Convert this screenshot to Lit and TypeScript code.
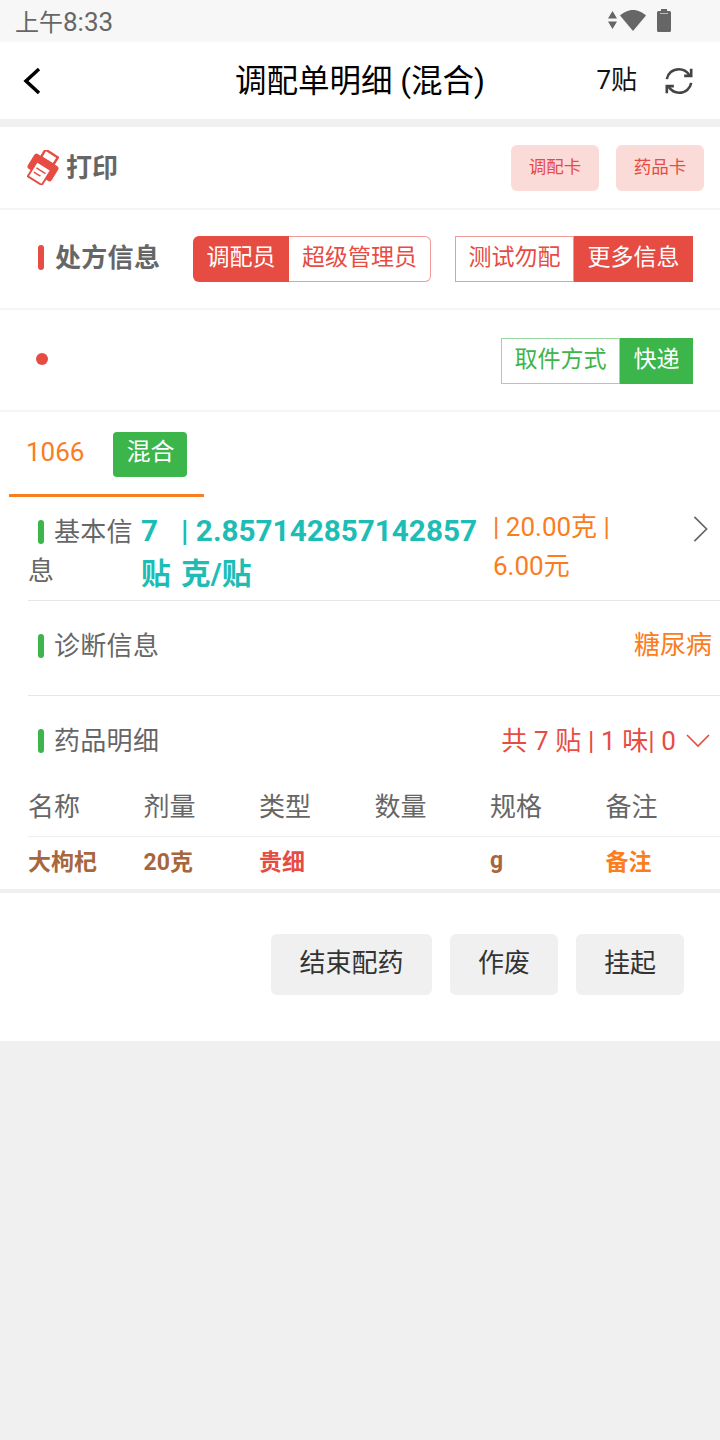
import { LitElement, html, css } from 'lit';
import { customElement } from 'lit/decorators.js';

const COLUMNS = ['名称', '剂量', '类型', '数量', '规格', '备注'];

@customElement('app-root')
export class AppRoot extends LitElement {
  static styles = css`
    :host {
      display: block;
      min-height: 1440px;
      background: #f0f0f0;
      font-family: Roboto, 'Noto Sans CJK SC', sans-serif;
      color: #666;
    }

    .status {
      height: 42px;
      background: #f7f7f7;
      display: flex;
      align-items: center;
      justify-content: space-between;
      padding: 0 49px 0 15px;
      box-sizing: border-box;
      font-size: 24px;
      color: #666;
    }

    .clock {
      padding-bottom: 2px;
    }

    .clock b {
      font-size: 26px;
      font-weight: 400;
    }

    .status-icons {
      display: flex;
      align-items: center;
      gap: 3px;
      padding-bottom: 2px;
    }

    .nav {
      height: 77px;
      background: #fff;
      display: grid;
      grid-template-columns: 1fr auto 1fr;
      align-items: center;
      padding: 0 24px;
      margin-bottom: 8px;
      color: #000;
    }

    .nav-back {
      margin-left: -2px;
    }

    .nav-title {
      font-size: 31.500px;
      padding-bottom: 5px;
    }

    .nav-right {
      display: flex;
      justify-content: flex-end;
      align-items: center;
      gap: 27px;
      margin-right: 2px;
      font-size: 26px;
      color: #111;
    }

    .nav-right span {
      padding-bottom: 6px;
    }

    .section {
      background: #fff;
    }

    .print-row {
      height: 81px;
      display: flex;
      align-items: center;
      padding: 0 16px 0 27px;
      border-bottom: 2px solid #f5f5f5;
    }

    .print-label {
      font-size: 26px;
      font-weight: 700;
      margin-left: 7px;
      flex: 1;
      padding-bottom: 4px;
    }

    .card-btn {
      width: 88px;
      height: 46px;
      margin-left: 17px;
      padding-bottom: 4px;
      box-sizing: border-box;
      display: flex;
      align-items: center;
      justify-content: center;
      border-radius: 6px;
      background: #fadbd8;
      color: #e74c43;
      font-size: 17.500px;
    }

    .info-row {
      height: 98px;
      display: flex;
      align-items: center;
      padding: 0 27px 0 38px;
      border-bottom: 2px solid #f5f5f5;
    }

    .bar {
      display: inline-block;
      width: 6px;
      height: 24px;
      border-radius: 3px;
      background: #3cb54a;
      vertical-align: -3px;
      margin-right: 10px;
    }

    .bar.red {
      height: 25px;
      margin-right: 11px;
      background: #e74c43;
    }

    .info-title {
      font-size: 26px;
      font-weight: 700;
      letter-spacing: 0.300px;
      white-space: nowrap;
      width: 155px;
      padding-bottom: 7px;
    }

    .seg {
      display: flex;
      height: 46px;
      font-size: 23px;
    }

    .seg span {
      display: flex;
      align-items: center;
      justify-content: center;
      box-sizing: border-box;
      height: 46px;
      padding-bottom: 8px;
    }

    .seg .solid {
      background: #e74c43;
      color: #fff;
    }

    .seg .line {
      border: 1px solid #f19b96;
      color: #e74c43;
      background: #fff;
    }

    .seg.round .solid {
      border-radius: 6px 0 0 6px;
    }

    .seg.round .line {
      border-left: 0;
      border-radius: 0 6px 6px 0;
    }

    .seg.second {
      margin-left: 24px;
    }

    .seg.green .line {
      border-color: #9ad8a2;
      color: #3cb54a;
    }

    .seg.green .solid {
      background: #3cb54a;
    }

    .pickup-row {
      height: 98px;
      padding: 2px 27px 0 36px;
      display: flex;
      align-items: center;
      justify-content: space-between;
      border-bottom: 2px solid #f5f5f5;
    }

    .dot {
      width: 12px;
      height: 12px;
      margin-top: -4px;
      border-radius: 50%;
      background: #e74c43;
    }

    .tab {
      width: 195px;
      height: 85px;
      margin-left: 9px;
      display: flex;
      align-items: flex-start;
      padding: 20px 0 0 17px;
      box-sizing: border-box;
      border-bottom: 3px solid #fa7d1e;
      color: #fa7d1e;
      font-size: 26px;
    }

    .tab-no {
      line-height: 40px;
    }

    .tab-badge {
      width: 74px;
      height: 45px;
      margin-left: 29px;
      padding-bottom: 10px;
      box-sizing: border-box;
      display: flex;
      align-items: center;
      justify-content: center;
      border-radius: 4px;
      background: #3cb54a;
      color: #fff;
      font-size: 24px;
    }

    .detail {
      margin-left: 28px;
      display: flex;
      font-size: 26px;
      border-bottom: 1px solid #e6e6e6;
      box-sizing: border-box;
    }

    .detail.basic {
      height: 104px;
      padding-top: 12px;
    }

    .detail.diag {
      height: 95px;
      padding-top: 25px;
      justify-content: space-between;
    }

    .detail.drugs {
      height: 74px;
      padding-top: 25px;
      border-bottom: 0;
      justify-content: space-between;
    }

    .label {
      line-height: 40px;
      letter-spacing: 0.300px;
    }

    .basic .label {
      width: 113px;
      flex: none;
      line-height: 39px;
      margin-top: 4px;
    }

    .bar.first {
      margin-left: 10px;
    }

    .teal {
      color: #1dbdb5;
      font-size: 29.700px;
      font-weight: 700;
      line-height: 43px;
      flex: none;
    }

    .teal.count {
      width: 40px;
    }

    .teal.dose {
      width: 312px;
    }

    .orange {
      color: #fa7d1e;
    }

    .basic .orange,
    .diag .orange {
      line-height: 39px;
    }

    .basic .orange {
      width: 130px;
      flex: none;
      margin-top: -1px;
    }

    .chevron {
      margin-left: auto;
      margin-right: 11px;
      margin-top: 6px;
    }

    .diag .orange {
      margin-right: 8px;
    }

    .drug-total {
      display: flex;
      align-items: flex-start;
      color: #e74c43;
      line-height: 40px;
      margin-right: 10px;
      gap: 10px;
      letter-spacing: 0.100px;
    }

    .table {
      margin-left: 28px;
    }

    .table-row {
      display: grid;
      grid-template-columns: repeat(6, 115.500px);
    }

    .table-head {
      height: 67px;
      padding-top: 2px;
      align-items: center;
      font-size: 26px;
      border-bottom: 1px solid #eee;
      box-sizing: border-box;
    }

    .table-body {
      height: 52px;
      padding-bottom: 6px;
      box-sizing: border-box;
      align-items: center;
      font-size: 23px;
      font-weight: 700;
      color: #a8663c;
    }

    .table-body .red {
      color: #e74c43;
    }

    .actions {
      height: 152px;
      border-top: 4px solid #f0f0f0;
      display: flex;
      justify-content: flex-end;
      align-items: flex-start;
      gap: 18px;
      padding: 41px 36px 0 0;
      box-sizing: border-box;
      background: #fff;
    }

    .action {
      height: 61px;
      padding: 0 28px 8px;
      box-sizing: border-box;
      display: flex;
      align-items: center;
      border-radius: 6px;
      background: #f0f0f0;
      color: #333;
      font-size: 26px;
    }

    .action.wide {
      padding: 0 28.500px 8px;
    }
  `;

  render() {
    return html`
      <div class="status">
        <span class="clock">上午<b>8:33</b></span>
        <span class="status-icons">
          <svg width="9" height="18" viewBox="0 0 9 18" fill="#666"><path d="M4.500 0L9 7.500H0zM4.500 18L0 10.500h9z" /></svg>
          <svg width="26" height="21" viewBox="0 0 26 21" fill="#666"><path d="M13 21L0 5.500C3 2.500 8 0 13 0s10 2.500 13 5.500z" /></svg>
          <svg width="14" height="23" viewBox="0 0 14 23" style="margin-left:8px"><path fill="#666" d="M4 0h6v2h2.500A1.500 1.500 0 0 1 14 3.500v18a1.500 1.500 0 0 1-1.500 1.500h-11A1.500 1.500 0 0 1 0 21.500v-18A1.500 1.500 0 0 1 1.500 2H4z" /><path d="M3 4.500h8" stroke="#bbb" stroke-width="1" /></svg>
        </span>
      </div>

      <div class="nav">
        <svg class="nav-back" width="20" height="30" viewBox="0 0 20 30" fill="none" stroke="#000" stroke-width="3.500"><path d="M17 3L4 15l13 12" /></svg>
        <span class="nav-title">调配单明细 (混合)</span>
        <span class="nav-right">
          <span>7贴</span>
          <svg width="30" height="30" viewBox="0 0 32 32" fill="none" stroke="#444" stroke-width="2.800">
            <path d="M3 14C4 8 9 3.500 16 3.500c5 0 8.500 2.500 11 6" />
            <path d="M29 18c-1 6-6 10.500-13 10.500-5 0-8.500-2.500-11-6" />
            <path d="M29 3v7.500h-7.500M3 29v-7.500h7.500" />
          </svg>
        </span>
      </div>

      <div class="section">
        <div class="print-row">
          <svg width="32" height="35" viewBox="0 0 33 36">
            <g transform="rotate(32 16.500 18)">
              <rect x="9" y="1" width="15" height="9" fill="none" stroke="#e74c43" stroke-width="2.500" />
              <rect x="2" y="9" width="29" height="18" rx="3" fill="#e74c43" />
              <rect x="8" y="16" width="17" height="18" fill="#fff" stroke="#e74c43" stroke-width="2" />
              <path d="M11 22h11M11 27h8" stroke="#e74c43" stroke-width="1.500" />
            </g>
          </svg>
          <span class="print-label">打印</span>
          <span class="card-btn">调配卡</span>
          <span class="card-btn">药品卡</span>
        </div>

        <div class="info-row">
          <span class="info-title"><i class="bar red"></i>处方信息</span>
          <div class="seg round">
            <span class="solid" style="width:96px">调配员</span>
            <span class="line" style="width:142px">超级管理员</span>
          </div>
          <div class="seg second">
            <span class="line" style="width:119px">测试勿配</span>
            <span class="solid" style="width:119px">更多信息</span>
          </div>
        </div>

        <div class="pickup-row">
          <span class="dot"></span>
          <div class="seg green">
            <span class="line" style="width:119px">取件方式</span>
            <span class="solid" style="width:73px">快递</span>
          </div>
        </div>

        <div class="tab">
          <span class="tab-no">1066</span>
          <span class="tab-badge">混合</span>
        </div>

        <div class="detail basic">
          <div class="label"><i class="bar first"></i>基本信息</div>
          <div class="teal count">7 贴</div>
          <div class="teal dose">| 2.857142857142857 克/贴</div>
          <div class="orange">| 20.00克 | 6.00元</div>
          <svg class="chevron" width="17" height="28" viewBox="0 0 17 30" fill="none" stroke="#666" stroke-width="1.800"><path d="M2 2l13 13L2 28" /></svg>
        </div>

        <div class="detail diag">
          <div class="label"><i class="bar first"></i>诊断信息</div>
          <div class="orange">糖尿病</div>
        </div>

        <div class="detail drugs">
          <div class="label"><i class="bar first"></i>药品明细</div>
          <div class="drug-total">
            <span>共 7 贴 | 1 味| 0</span>
            <svg width="24" height="40" viewBox="0 0 24 40" fill="none" stroke="#e74c43" stroke-width="1.600"><path d="M1 14l11 11 11-11" /></svg>
          </div>
        </div>

        <div class="table">
          <div class="table-row table-head">
            ${COLUMNS.map((c) => html`<span>${c}</span>`)}
          </div>
          <div class="table-row table-body">
            <span>大枸杞</span>
            <span>20克</span>
            <span class="red">贵细</span>
            <span></span>
            <span>g</span>
            <span class="orange">备注</span>
          </div>
        </div>

        <div class="actions">
          <span class="action wide">结束配药</span>
          <span class="action">作废</span>
          <span class="action">挂起</span>
        </div>
      </div>
    `;
  }
}

declare global {
  interface HTMLElementTagNameMap {
    'app-root': AppRoot;
  }
}
